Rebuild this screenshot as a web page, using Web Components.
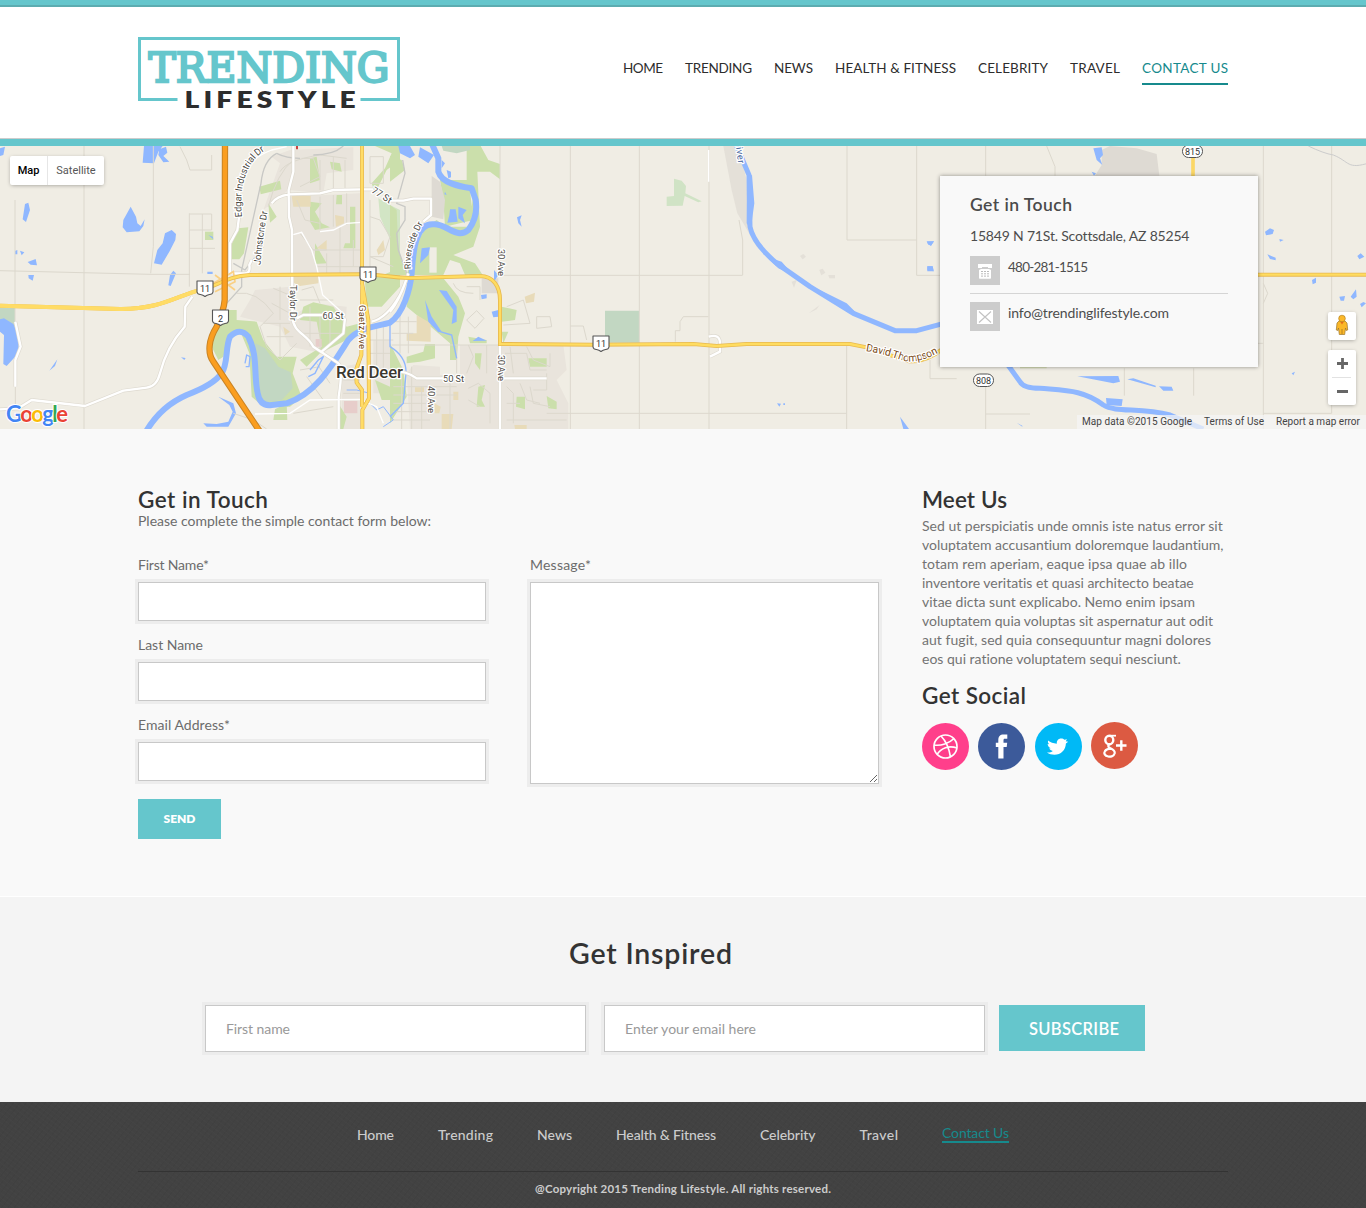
<!DOCTYPE html>
<html lang="en">
<head>
<meta charset="utf-8">
<title>Trending Lifestyle - Contact Us</title>
<style>
body{margin:0;background:#f9f9f9;font:14px/20px Lato,"Open Sans",sans-serif;color:#6c6c6c}
</style>
</head>
<body>
<site-header></site-header>
<map-banner><info-card></info-card></map-banner>
<contact-section></contact-section>
<inspire-section></inspire-section>
<site-footer></site-footer>
<script>
const define = (name, html, after) => customElements.define(name, class extends HTMLElement {
  constructor(){ super(); this.attachShadow({mode:'open'}); }
  connectedCallback(){
    this.shadowRoot.innerHTML = typeof html === 'function' ? html(this) : html;
    if (after) after(this);
  }
});

define('brand-logo', `
<style>:host{display:block;width:262px;height:75px}svg{display:block;overflow:visible}</style>
<svg width="262" height="75" viewBox="138 37 262 75">
 <path d="M177.500 99.500H139.500V38.500H398.500V99.500H360.500" fill="none" stroke="#65c6cc" stroke-width="3"/>
 <text x="148.500" y="81.500" font-family="DejaVu Serif" font-size="41" textLength="241" lengthAdjust="spacingAndGlyphs" fill="#65c6cc" stroke="#65c6cc" stroke-width="2.300">TRENDING</text>
 <text transform="translate(184.500 107.500) scale(1.250 1)" font-family="Lato" font-weight="800" font-size="22.500" textLength="137" fill="#2d2d2d">LIFESTYLE</text>
</svg>`);

define('nav-link', el => `
<style>
:host{display:block;color:#2d2d2d}
a{display:block;color:inherit;text-decoration:none}
:host([active]) a{color:#168a8d;border-bottom:2px solid #168a8d;padding-bottom:var(--gap,5px)}
</style><a><fit-text w="${el.getAttribute('w')}">${el.getAttribute('label').replace('&','&amp;')}</fit-text></a>`);

define('site-header', `
<style>
:host{display:block;background:#fff;height:132px;border-top:7px solid #65c6cc;border-bottom:7px solid #65c6cc;box-shadow:inset 0 -1px #ccc;position:relative}
:host::before{content:"";position:absolute;left:0;right:0;top:-2px;height:2px;background:#5cacb0}
.wrap{width:1090px;margin:0 auto;display:flex;justify-content:space-between;align-items:flex-start}
brand-logo{margin-top:30px}
nav{display:flex;gap:22px;margin-top:51px;font-size:13.500px}
</style>
<div class="wrap"><brand-logo></brand-logo>
<nav><nav-link w="40" label="HOME"></nav-link><nav-link w="67" label="TRENDING"></nav-link><nav-link w="39" label="NEWS"></nav-link><nav-link w="121" label="HEALTH & FITNESS"></nav-link><nav-link w="70" label="CELEBRITY"></nav-link><nav-link w="50" label="TRAVEL"></nav-link><nav-link active w="86" label="CONTACT US"></nav-link></nav></div>`);

define('city-map', `
<style>:host{display:block}svg{display:block}
.l{font-family:Roboto,sans-serif;font-size:9.500px;fill:#4b4943;stroke:#fff;stroke-width:2.500px;paint-order:stroke;stroke-linejoin:round}
.g{fill:#cbdfab}.p{fill:#c2d7c2}.u{fill:#e9e4dc}.t{fill:#e8dbb9}.w{fill:#8fb7ff}.k{fill:#dedad3}
.m{fill:none;stroke:#dcd8cd;stroke-width:3}.wr{fill:none;stroke:#fff;stroke-width:7;stroke-linejoin:round}.wc{fill:none;stroke:#dedad0;stroke-width:11}
.n{fill:none;stroke:#8fb7ff;stroke-linejoin:round}
</style>
<svg width="1366" height="283" viewBox="0 146 1366 283">
<defs>
 <path id="hwy11" d="M0 497L360 507C480 508 530 468 600 450C650 440 680 409 750 405L1080 403C1140 402 1160 412 1230 414L1440 408C1480 408 1500 440 1500 480V612L1780 614L2080 612L2150 618L2240 612H2550L2600 622L2720 662Q2770 672 2830 625M3774 404H4110"/>
 <path id="gaetz" d="M1086 10V430L1105 540L1107 775L1087 810V880M1087 435L1084 645L1068 690L1070 728L1086 750V800"/>
 <path id="hwy2" d="M675 0L674 480Q672 510 650 560C625 600 622 640 640 665L790 890"/>
 <path id="white" d="M880 10V95L866 150L867 230L876 270L877 530C880 580 920 580 940 620L1015 670Q1030 680 1016 770V880M815 190Q830 168 867 163L960 160L1000 150L1086 148H1120M690 400V310L712 270L718 225M690 400H735Q752 400 748 375L755 360M1500 612V880M1170 693Q1215 690 1250 715H1380M1500 715H1640M1170 515Q1200 480 1225 400M1170 182H1210L1240 176H1293V225L1270 245M577 470L556 500L554 560Q500 620 480 700Q470 740 440 743L370 752L255 798L95 780L55 805L0 808M46 545L62 620L46 660V740M1115 545Q1160 535 1200 465M890 535L910 525H1035M1035 535L1030 580L965 635M2126 590Q2160 580 2160 610V635L2130 650"/>
</defs>
<rect x="0" y="146" width="1366" height="283" fill="#f0ede4"/>
<g transform="translate(0 140) scale(.33333333)">
 <path class="p" d="M0 500H45V585L0 570ZM1815 512H1918V608H1815Z"/>
 <g transform="translate(600 0)">
  <path class="u" d="M215 50L270 30L460 22V90L380 100L370 160L265 150L190 210L240 70ZM270 170L480 160V400H280ZM165 450L270 440V530L345 490L440 500L435 590L370 640L270 620L240 560L120 530L150 480ZM425 680L480 670V867H425ZM510 420H570L560 480H510ZM520 600H570V760H520Z"/>
  <path class="g" d="M115 265L145 262L132 340L118 358H90L92 320ZM178 140L240 122L244 148L182 163ZM330 55L350 50L360 120L330 130ZM390 65L420 70L425 95L395 88ZM410 165H426V193H408ZM330 185L365 190L345 215L365 250L390 262L345 270L330 245ZM205 190L230 230L210 248ZM450 200H466V325L430 325L435 310H450ZM525 18H600V60L560 90L525 160L515 130L555 85L575 40ZM345 310L380 370L345 372ZM495 425L600 385V440L545 500L500 500ZM75 510H110V540L170 545L190 600L230 650L290 650L278 700L305 770L270 800L190 800L155 770L148 640L120 572L85 590L70 650L55 660L30 610ZM310 500L340 487L400 500L440 560L480 550V580L360 640L320 680L300 660L365 620L350 545L300 540ZM525 720L570 740L590 720L600 780H545ZM225 808L260 790L262 840L220 840ZM415 790L440 830L430 867H415Z"/>
  <path class="p" d="M165 610L195 625L235 680L272 697L278 745L245 780L190 788L168 760Z"/>
  <path d="M535 175L570 195L600 210V380L580 320L540 230Z" fill="#d2e5c5"/>
  <path class="t" d="M275 168H332V200H280ZM350 325L380 300V330ZM405 225L432 230V250L408 260ZM275 408L355 405L355 430L300 438L275 425ZM530 330L550 300L555 330L535 345ZM250 560L270 575L255 585Z"/>
  <path fill="#e7cdca" d="M432 783H472V820H432ZM347 597H365V620H347Z"/>
 </g>
 <g transform="translate(1170 0)">
  <path class="g" d="M0 48L35 60L45 90L0 125ZM230 18H272L295 60L330 72V118L300 95L262 95L270 260L250 320L190 345L255 370L278 405H225L210 370L180 360L160 405H50L85 300L110 260L140 240L165 260L240 260L250 150L150 120H230ZM150 120L240 150L250 240L165 260L160 180ZM0 195L20 210L25 330L50 405H0ZM55 415H160L205 470L225 520L205 590L200 660L180 660V610L145 580L110 550L50 500ZM335 500L380 510L375 540L335 545ZM335 575H355L340 610ZM50 650L100 635L105 612H135V655L90 665L50 670ZM235 590L290 600V610H240ZM0 610L40 690L50 770L0 850Z"/>
  <path class="p" d="M155 18H240V30L200 40L160 32Z"/>
  <path class="u" d="M70 675L150 680V705H210V615H325V867H60L50 700ZM335 615H520L530 690L500 720L535 790V867H335Z"/>
  <path fill="#f0ede4" d="M118 322H140V398H118Z"/>
  <path class="g" d="M255 640L275 640L270 690L255 670ZM415 655H470V680H420ZM380 770H405V808L378 800ZM470 768L500 785V808L475 805ZM265 740L285 735L275 780L285 800H260Z"/>
  <path class="k" d="M125 108L150 125L165 180L160 238L125 230ZM275 415H325V460H275Z"/>
  <path class="t" d="M80 525L122 550V605L50 602V580H80ZM404 470L435 458L432 485L408 490ZM155 822H190L185 867H155ZM133 790L152 800L148 820H135ZM75 742H102V756H75ZM190 755H205V780H190ZM373 855H410V867H375Z"/>
  <path class="w" d="M25 18H60L75 45L60 55L30 40ZM90 22L132 45L115 70L85 50ZM180 208L197 208L203 245L172 248L178 225ZM205 200L230 210L218 225L225 250L205 235ZM95 325L120 322L115 345L90 370ZM147 450L170 453L200 500V545L185 552L190 510ZM105 480L125 530L155 575L145 577L115 545ZM273 465L290 463V475L275 478ZM305 515L325 510V530L310 532ZM248 603L265 590L290 602ZM312 390L325 405L312 425ZM381 232L395 226L390 240L395 260L385 250ZM155 60L165 70L155 85ZM170 90L183 95V112L175 115ZM165 155L170 165L163 163Z"/>
 </g>
 <g transform="translate(1950 0)">
  <path class="k" opacity=".7" d="M220 18H265L290 120L292 190L300 270L330 310L320 320L280 250L262 220L245 150ZM450 348L460 342L468 350L458 358ZM508 390L518 386L526 398L514 406ZM535 405H555V415H538ZM425 425L440 420L432 443ZM476 520L508 496L500 508Z"/>
  <path fill="#d0e3c5" d="M72 116L95 122L108 138L106 160L155 184L145 187L104 168L98 197L50 198V170L72 168Z"/>
  <path class="w" d="M832 305L852 304L843 317L834 313ZM832 379L848 379L851 394L832 391ZM381 790L393 791L388 800ZM400 790h5v5h-5zM750 830L777 867H760Z"/>
 </g>
 <g transform="translate(2760 0)">
  <path class="k" d="M545 30L570 18L650 25L710 42L718 107H525L545 75Z"/>
  <path class="w" d="M520 25L545 22L549 45L540 55L547 75L530 60ZM515 95L528 100L522 107ZM20 304L42 304L33 317L24 313ZM22 379H38L41 394H22ZM1035 275L1050 265L1062 270L1058 282L1038 286ZM1078 297L1091 300L1080 305ZM1042 343L1067 353V361L1050 357ZM1312 348L1322 340L1333 350L1318 358ZM1176 420L1188 413L1188 428L1178 433ZM1292 470L1308 448L1310 470L1300 478ZM1258 470L1275 468L1272 482L1262 482ZM1320 492L1330 486L1338 490L1325 502ZM472 709L595 708L600 725L580 730ZM622 718L640 715L707 737V742ZM717 739L755 740L760 752H730ZM558 774L608 778L605 798L560 795ZM1115 700L1125 695L1120 706ZM290 848L307 857V860Z"/>
  <path fill="#d9dfba" d="M300 680H380V685H300Z"/>
 </g>
 <g class="w">
  <path d="M0 538L12 535L40 552L57 590L55 640L20 678L10 672L12 585L0 575ZM75 192L85 188L90 210L78 246L68 238ZM392 200L408 230L412 250L422 258L434 238L430 258L418 274L380 277L368 262L370 240ZM515 270L528 282L526 300L508 335L485 374L462 370L472 330L488 310L495 280ZM520 392L528 400L512 438L505 436L510 405ZM432 18H488L475 35L462 70L428 68ZM478 28L498 20L502 38L490 48L508 65L490 67L475 45ZM0 25L15 20L10 45L0 48ZM83 366L107 357L111 376L92 374ZM45 333L52 330V343H45ZM60 332L73 337L65 346ZM85 405L102 405L98 422L86 415ZM148 692L172 658L165 678ZM622 395H638V402H622ZM543 652L557 654L553 660ZM655 770L700 790L708 820L685 860H620L610 850L650 852L685 845L698 815L688 795Z"/>
  <path class="g" d="M615 275H640V300H615Z"/><path d="M625 285L638 290L640 298Z"/>
 </g>
 <!-- country grid and residential streets -->
 <path class="m" d="M45 180V545M46 740V800M252 18V867M0 392L450 403H570M460 18V320L452 400M568 220V440M568 222H635V270H568M568 325H645M607 222V400M540 20L560 60L570 90H635V45M1711 18V867M1918 18V867M2127 18V867M1500 18V400M1500 406H2228M2217 240L2228 300V405M2541 18V300H2750V18M2750 300V406H2820M2540 612V867M1640 820H2540M2957 18V107M3140 18L3165 80V107M3790 18V867M3995 18V820H3790M2790 660V716H2870M2957 740V867M2957 822H3090M3373 685V767M3581 685V767M3790 430L3803 460L3790 490M2026 605V572H2040V545L2050 530H2125M1710 558H1750L1760 600M3790 610H3760"/>
 <path class="m" stroke-width="2" d="M840 95Q860 60 960 45L1040 55M805 200Q830 100 880 60M905 55H940L960 110L900 140M960 60V150M1000 50V150M1035 60V145M890 180L915 240L960 250M960 170V270M1000 165V260M1040 160V255M900 280L940 330H980M950 380L1080 380M980 340V400M1020 260V400M1060 300V380M940 330H1080M1110 50H1150V130H1110ZM1110 180V390M1110 230L1140 240L1170 290L1150 350H1110M1110 350L1180 380M710 460Q770 450 820 520L780 560L800 620L840 660L890 610M820 445L880 470M815 490L870 520M840 440V540M790 550L870 550M800 590L880 590M840 550V650M905 450L940 440L960 490M900 480H1000M930 500V620M960 520V640M990 520V610M900 580H1020M1020 690H1080M1030 720H1080M1030 760H1080M900 690L960 680M920 710L970 780M950 670L990 730M880 820L1000 800M1110 600H1180M1110 640H1170M1130 560V700M1150 560V700M700 820L760 840L800 867"/>
 <path class="m" stroke-width="2" d="M1175 545H1250M1175 580H1240M1175 615H1500M1200 520V640M1225 530V640M1180 740H1370M1180 765H1370M1180 790H1290M1180 815H1290M1180 840H1290M1205 680V867M1235 680V867M1265 740V867M1350 720V867M1370 615V700M1405 615L1420 650L1400 700M1460 615V700M1405 745L1435 730L1470 760V850M1405 780L1440 800M1400 440H1440V480M1360 430Q1370 460 1420 460M1400 540L1430 512L1452 535L1425 565ZM1520 500L1570 480L1590 550L1510 555M1610 530L1650 530L1655 560L1610 565ZM1515 640H1580L1590 690H1640M1530 620L1540 700M1580 620L1600 660L1650 680V640M1640 700L1640 750L1600 750M1520 740L1540 760V850M1560 730L1580 780L1620 790M1520 790H1560M1520 840H1700M1590 740L1600 790L1650 800"/>
 <path d="M790 320L735 390L700 370M830 40Q790 60 783 130L725 390L725 440L680 490M830 40Q860 55 900 55M940 45Q1000 45 1030 18M1208 60L1215 100L1190 190L1215 200V240L1190 280L1195 330L1220 400" fill="none" stroke="#c8c8c5" stroke-width="4"/>
 <path d="M3925 18Q3970 40 4000 45C4050 65 4040 90 4110 68" fill="none" stroke="#ccc" stroke-width="3"/>
 <!-- river -->
 <path class="n" stroke-width="18" d="M435 880Q480 800 560 765Q640 735 665 700C685 670 675 625 690 590Q720 560 745 590C775 650 760 700 773 760Q780 800 815 795L860 790C950 760 1000 670 1045 600C1080 560 1130 560 1170 548C1210 520 1230 450 1235 400C1240 320 1250 250 1300 253C1340 250 1370 300 1405 270Q1435 230 1427 180L1415 145C1380 140 1325 130 1315 95V55L1295 10"/>
 <path class="n" stroke-width="15" d="M2210 18L2247 105L2250 260Q2260 310 2330 370L2430 440L2560 520L2685 572H2750L2840 548M3020 670L3060 725Q3070 745 3120 745C3200 752 3250 750 3310 795C3350 820 3420 800 3510 825L3610 867"/>
 <path class="w" d="M2241 110L2256 105L2263 190L2252 270L2240 250ZM2300 350L2345 365L2380 405L2335 385ZM2400 425L2460 450L2540 490L2570 520L2540 512Z"/>
 <path class="n" stroke-width="4" d="M735 670L740 645L750 650L747 680L737 680M1170 550V620Q1220 650 1218 700L1210 790L1170 830M1320 575L1355 585L1370 655M930 690L955 660L970 650L945 700L925 710"/>
 <path class="n" stroke-width="3" d="M1040 750H1070L1110 760M1110 790L1130 810L1150 800L1180 840L1150 860"/>
 <!-- roads -->
 <use href="#white" class="wc"/><use href="#white" class="wr"/>
 <path d="M716 235Q705 190 735 100Q750 55 815 30L860 20" fill="none" stroke="#fff" stroke-width="4"/>
 <path d="M880 284L905 277L935 330L950 380L968 465L1035 525M960 275L1000 270L1040 250L1084 247M765 822L870 820L930 780L1080 778L1130 800L1150 850" fill="none" stroke="#fff" stroke-width="4"/>
 <path d="M2126 30V125" stroke="#fff" stroke-width="4"/>
 <path d="M640 430L700 395L705 425L645 455M645 405L705 450" fill="none" stroke="#fad084" stroke-width="5"/>
 <use href="#gaetz" fill="none" stroke="#e5b54c" stroke-width="12"/><use href="#gaetz" fill="none" stroke="#ffdc66" stroke-width="8"/>
 <use href="#hwy11" fill="none" stroke="#e7b950" stroke-width="12"/><use href="#hwy11" fill="none" stroke="#ffdc60" stroke-width="7"/>
 <path d="M0 497L360 507C480 508 530 468 600 450L625 443" fill="none" stroke="#ffdc66" stroke-width="12"/>
 <path d="M3579 50V110" stroke="#fbd765" stroke-width="11"/>
 <use href="#hwy2" fill="none" stroke="#c98425" stroke-width="19"/><use href="#hwy2" fill="none" stroke="#fa9e20" stroke-width="13"/>
 <path d="M888 18h6v10h-6z" fill="#c44"/>
</g>
<defs>
 <path id="t1" d="M242 217Q239 190 247 172T270 148"/><path id="t2" d="M260.500 265Q262 240 269 205"/>
 <path id="t3" d="M411 269Q408 247 427 217"/><path id="t4" d="M866 351Q880 353 901 360Q919 366 948 347"/><path id="t5" d="M371 192L395 207"/>
 <g id="sh"><path d="M-8 -7.500H8V3.500Q7.500 6 4.500 6Q2 6.500 0 8Q-2 6.500-4.500 6Q-7.500 6-8 3.500Z" fill="#fff" stroke="#555" stroke-width="1.100" stroke-linejoin="round"/></g>
</defs>
<g class="l">
 <text textLength="74"><textPath href="#t1">Edgar Industrial Dr</textPath></text>
 <text textLength="54"><textPath href="#t2">Johnstone Dr</textPath></text>
 <text style="font-size:9px" textLength="48"><textPath href="#t3">Riverside Dr</textPath></text>
 <text><textPath href="#t5">77 St</textPath></text>
 <text style="font-size:10.500px;fill:#7a4a16" textLength="75"><textPath href="#t4">David Thompson</textPath></text>
 <text transform="translate(290 285) rotate(90)" textLength="36">Taylor Dr</text>
 <text transform="translate(358.500 305) rotate(90)" textLength="44" style="fill:#71491b">Gaetz Ave</text>
 <text transform="translate(497.500 249) rotate(90)" textLength="27">30 Ave</text>
 <text transform="translate(497.500 355) rotate(90)" textLength="26">30 Ave</text>
 <text transform="translate(427.500 386) rotate(90)" textLength="27">40 Ave</text>
 <text x="322.500" y="319" textLength="21">60 St</text><text x="443" y="382" textLength="21">50 St</text>
 <text transform="translate(735.500 144) rotate(82)" textLength="20" style="fill:#3d5d9b">river</text>
 <text x="336" y="377.500" textLength="67" style="font-size:17px;font-weight:500;fill:#3b382f">Red Deer</text>
</g>
<g font-family="Roboto,sans-serif" font-size="9" text-anchor="middle" fill="#333">
 <use href="#sh" x="205" y="288.500"/><text x="205" y="292">11</text>
 <use href="#sh" x="220.500" y="317.500"/><text x="220.500" y="321.500">2</text>
 <use href="#sh" x="368" y="274.500"/><text x="368" y="278">11</text>
 <use href="#sh" x="601" y="343.500"/><text x="601" y="347">11</text>
 <g fill="#fff" stroke="#555"><rect x="1182.500" y="145" width="20" height="12.500" rx="6"/><rect x="973.500" y="374" width="20" height="12.500" rx="6"/></g>
 <text x="1192.500" y="154.500">815</text><text x="983.500" y="383.500">808</text>
</g>
<text x="6" y="421.500" font-family="Lato" font-size="22" textLength="62" stroke="#fff" stroke-width="2" paint-order="stroke" font-weight="700"><tspan fill="#4285f4">G</tspan><tspan fill="#ea4335">o</tspan><tspan fill="#fbbc05">o</tspan><tspan fill="#4285f4">g</tspan><tspan fill="#34a853">l</tspan><tspan fill="#ea4335">e</tspan></text>
</svg>`);

define('map-banner', `
<style>
:host{display:block;position:relative;height:283px;overflow:hidden;font-family:Roboto,sans-serif}
.types{position:absolute;left:10px;top:10px;display:flex;background:#fff;border-radius:2px;box-shadow:0 1px 4px -1px rgba(0,0,0,.4);font-size:11px;line-height:29px;color:#565656}
.types b{width:37px;font-weight:500;color:#000;border-right:1px solid #e6e6e6;text-align:center}.types span{width:56px;text-align:center}
.ctl{position:absolute;right:10px;top:166px;display:flex;flex-direction:column;gap:10px}
.ctl svg{display:block;background:#fff;border-radius:2px;box-shadow:0 1px 4px -1px rgba(0,0,0,.4)}
.legal{position:absolute;right:0;bottom:0;display:flex;font-size:10px;line-height:14px;color:#444}
.legal span{background:rgba(245,245,245,.72);padding:0 6px}
.legal span:first-child{padding-left:5px}
::slotted(info-card){position:absolute;left:940px;top:30px}
</style>
<city-map></city-map>
<div class="types"><b>Map</b><span>Satellite</span></div>
<slot></slot>
<div class="ctl">
<svg width="28" height="28" viewBox="0 0 28 28"><path d="M11 9L9 11 8.300 18l1.500.5L10.500 16l.8 6.500h5.400l.8-6.500.7 2.500 1.500-.5L19 11l-2-2z" fill="#fbb829" stroke="#9b762e" stroke-width=".7"/><path d="M12 9.500h4l-2 3z" fill="#e66b1d"/><circle cx="14" cy="6.500" r="3.300" fill="#fbb829" stroke="#b58222" stroke-width=".7"/><path d="M14 17v5" stroke="#a57620" stroke-width=".8"/></svg>
<svg width="28" height="55" viewBox="0 0 28 55"><path d="M9 13.500h11M14.500 8v11M9 41.500h11" stroke="#666" stroke-width="2.800"/><path d="M4 27.500h19" stroke="#e2e2e2"/></svg>
</div>
<div class="legal"><span><fit-text w="110">Map data ©2015 Google</fit-text></span><span><fit-text w="60">Terms of Use</fit-text></span><span><fit-text w="84">Report a map error</fit-text></span></div>`);

define('info-card', `
<style>
:host{display:block;box-sizing:border-box;width:318px;height:191px;padding:19px 30px 0;background:#f9f9f9;box-shadow:0 0 4px rgba(0,0,0,.42);font:14px/20px Lato,sans-serif;color:#4d4d4d}
h3{margin:0;font-size:17.500px;line-height:20px;font-weight:600;color:#4a4a4a}
p{margin:0;padding-top:11px;height:31px;box-sizing:border-box}
.row{display:flex;gap:8px;height:37px;margin-top:10px}
.row + .row{margin-top:8px}
.row.first{border-bottom:1px solid #d5d5d5;font-size:13.500px}
.row fit-text{margin-top:1px}
svg{display:block;background:#ccc}
</style>
<h3><fit-text w="102">Get in Touch</fit-text></h3>
<p><fit-text w="219">15849 N 71St. Scottsdale, AZ 85254</fit-text></p>
<div class="row first"><svg width="30" height="29" viewBox="0 0 30 29"><path d="M8 8h14v4h-4v-1h-6v1H8zM9 14l2-1h8l2 1v8q0 .8-.8.8H9.800Q9 22.800 9 22z" fill="#fff"/><path d="M11 15.500h8M11 17.800h8M11 20.100h8" stroke="#bbb" stroke-dasharray="2 1" stroke-width="1"/></svg><fit-text w="80">480-281-1515</fit-text></div>
<div class="row"><svg width="30" height="29" viewBox="0 0 30 29"><path d="M7 8h16v14H7z" fill="#fff"/><path d="M9 9.500l12 11M21 9.500l-12 11" stroke="#c2c2c2" stroke-width="1.100"/></svg><fit-text w="161">info@trendinglifestyle.com</fit-text></div>`);

define('form-field', el => `
<style>
:host{display:block}
label{display:block;line-height:20px;margin-bottom:7px}
input,textarea{display:block;box-sizing:border-box;width:100%;height:39px;margin:0;padding:0 10px;border:1px solid #c8c8c8;background:#fff;box-shadow:0 0 0 3px #ededed;border-radius:0;outline:0;font:14px Lato}
textarea{height:202px}
</style><label><fit-text w="${el.getAttribute('w')}">${el.getAttribute('label')}</fit-text></label>${el.hasAttribute('area')?'<textarea></textarea>':'<input>'}`);

define('social-icon', el => {
 const k = {
  dribbble:['#ff3f8b','<g fill="none" stroke="#fff" stroke-width="1.700"><circle cx="23.500" cy="23.500" r="11.500"/><path d="M19 13C24 18 27 25 28.500 34M12 22C19 23 27 20.500 32 15.500M15 31.500C19 25 27 22 35 25"/></g>'],
  facebook:['#3c5a9a','<path d="M20.300 35.500V24H17.800v-4.200h2.500v-2.600c0-3.700 1.700-5.700 5.300-5.700h3.700v4.200H27c-1.300 0-1.500.6-1.500 1.700v2.400h3.700l-.5 4.200h-3.200v11.500z" fill="#fff"/>'],
  twitter:['#00b9f6','<path d="M12 29.500c2.700.1 4.500-.4 5.800-1.500-1.800-.3-3-1.300-3.500-2.700l1.500-.1c-2-.9-3-2.300-3.200-4.200l1.700.2c-1.200-1-1.500-2.200-1.300-3.800 2.500 1.800 5.300 2.800 8.800 3.300-.2-3 1.500-5.200 4.300-5.200 1.500 0 2.500.5 3.300 1.300l2.600-.6-1.300 2 2.500.5-2.300 1.700c-.2 6.500-5 11.300-11.500 11.300-2.700 0-5.300-.7-7.400-2.200z" fill="#fff"/>'],
  google:['#dc5a42','<g fill="none" stroke="#fff"><ellipse cx="18.300" cy="18" rx="4" ry="4.300" stroke-width="2.400"/><path d="M19 13.700h6" stroke-width="1.800"/><path d="M19.500 22c-3 1-3 2.500-.5 4 3.500 1.700 5.200 3 4.700 5.300-.8 2.900-4 3.700-6.500 3.200-3.500-.5-4.700-3.300-3.200-5.500 1.300-1.800 3.500-2.300 6.200-2.300" stroke-width="2.200"/><path d="M25 23.500h10.500M30.300 18.200v10.600" stroke-width="2.400"/></g>']
 }[el.getAttribute('kind')];
 return `<style>:host{display:block;width:47px;height:47px}svg{display:block}</style><svg width="47" height="47" viewBox="0 0 47 47"><circle cx="23.500" cy="23.500" r="23.500" fill="${k[0]}"/>${k[1]}</svg>`;
});

define('contact-section', `
<style>
:host{display:block;height:467px;border-bottom:1px solid #fff;background:#f9f9f9}
.wrap{width:1090px;margin:0 auto;display:flex;padding-top:56px}
.form{width:742px;margin-right:42px;display:flex;flex-direction:column}
h2{margin:0;padding-top:1px;height:28px;box-sizing:border-box;font-size:22.500px;line-height:28px;font-weight:600;color:#333}
.sub{height:44px;line-height:20px;margin-top:-2px}
.cols{display:flex;gap:44px;align-items:flex-start}
.left{width:348px;display:flex;flex-direction:column;gap:14px}
.msg{width:349px}
button{align-self:flex-start;width:83px;height:40px;margin-top:4px;border:0;border-radius:0;background:#65c6cc;color:#fff;font:800 12px Lato;padding:0 0 2px}
.side{width:306px;color:#737373}
.para{display:flex;flex-direction:column;line-height:19px;margin-top:3px;margin-bottom:13px}
.soc{display:flex;gap:9.300px;margin-top:14px}
.soc :last-child{margin-top:-1px}
</style>
<div class="wrap">
<div class="form"><h2><fit-text w="130">Get in Touch</fit-text></h2>
<div class="sub"><fit-text w="293">Please complete the simple contact form below:</fit-text></div>
<div class="cols"><div class="left"><form-field w="71" label="First Name*"></form-field><form-field w="65" label="Last Name"></form-field><form-field w="92" label="Email Address*"></form-field><button><fit-text w="32">SEND</fit-text></button></div>
<form-field class="msg" area w="61" label="Message*"></form-field></div></div>
<div class="side"><h2><fit-text w="85">Meet Us</fit-text></h2>
<div class="para"><fit-text w="301">Sed ut perspiciatis unde omnis iste natus error sit</fit-text><fit-text w="302">voluptatem accusantium doloremque laudantium,</fit-text><fit-text w="265">totam rem aperiam, eaque ipsa quae ab illo</fit-text><fit-text w="272">inventore veritatis et quasi architecto beatae</fit-text><fit-text w="273">vitae dicta sunt explicabo. Nemo enim ipsam</fit-text><fit-text w="291">voluptatem quia voluptas sit aspernatur aut odit</fit-text><fit-text w="289">aut fugit, sed quia consequuntur magni dolores</fit-text><fit-text w="259">eos qui ratione voluptatem sequi nesciunt.</fit-text></div>
<h2><fit-text w="104">Get Social</fit-text></h2>
<div class="soc"><social-icon kind="dribbble"></social-icon><social-icon kind="facebook"></social-icon><social-icon kind="twitter"></social-icon><social-icon kind="google"></social-icon></div></div>
</div>`);

define('inspire-section', `
<style>
:host{display:block;height:205px;background:#f4f4f4}
h2{margin:0 0 0 569px;padding-top:38px;font-size:28.500px;line-height:36px;font-weight:600;color:#333}
.row{display:flex;margin:34px 0 0 205px}
.box{box-sizing:border-box;width:381px;height:47px;margin-right:18px;padding-left:20px;line-height:45px;border:1px solid #c8c8c8;box-shadow:0 0 0 3px #ececec;background:#fff;color:#999}
.box + .box{margin-right:14px}
button{width:146px;height:46px;padding:2px 0 0 4px;border:0;background:#65c6cc;color:#fff;font:600 16.500px Lato}
</style>
<h2><fit-text w="163">Get Inspired</fit-text></h2>
<div class="row"><div class="box"><fit-text w="64">First name</fit-text></div><div class="box"><fit-text w="131">Enter your email here</fit-text></div><button><fit-text w="90">SUBSCRIBE</fit-text></button></div>`);

define('site-footer', `
<style>
:host{display:block;height:106px;background-color:#424242;background-image:repeating-linear-gradient(37deg,rgba(255,255,255,.012) 0 1px,transparent 1px 4px),repeating-linear-gradient(-52deg,rgba(0,0,0,.03) 0 1px,transparent 1px 5px);overflow:hidden}
nav{width:1090px;height:70px;margin:0 auto;box-sizing:border-box;padding:23px 0 0 219px;display:flex;gap:44px;align-items:flex-start;border-bottom:1px solid #333;font-weight:500}
nav-link{color:#ccc;--gap:0px;white-space:nowrap}
nav-link[active]{margin-top:-1px;font-weight:400;line-height:17px}
p{margin:7px 0 0;text-align:center;font-size:11.500px;line-height:20px;font-weight:700;color:#ccc}
</style>
<nav><nav-link w="37" label="Home"></nav-link><nav-link w="55" label="Trending"></nav-link><nav-link w="35" label="News"></nav-link><nav-link w="100" label="Health & Fitness"></nav-link><nav-link w="55.500" label="Celebrity"></nav-link><nav-link w="38.500" label="Travel"></nav-link><nav-link active w="67" label="Contact Us"></nav-link></nav>
<p><fit-text w="296">@Copyright 2015 Trending Lifestyle. All rights reserved.</fit-text></p>`);

/* One line of text, tracked so that it fills the width given in "w". */
customElements.define('fit-text', class extends HTMLElement {
  constructor(){
    super();
    this.attachShadow({mode:'open'}).innerHTML = '<style>:host{display:inline-block;white-space:nowrap;vertical-align:top}span{display:inline-block;vertical-align:top}</style><span><slot></slot></span>';
  }
  connectedCallback(){
    const w = +this.getAttribute('w'), s = this.shadowRoot.querySelector('span');
    const n = this.textContent.length;
    s.style.letterSpacing = ((w - s.getBoundingClientRect().width) / (n - 1)).toFixed(3) + 'px';
    this.style.width = w + 'px';
  }
});
</script>
</body>
</html>
